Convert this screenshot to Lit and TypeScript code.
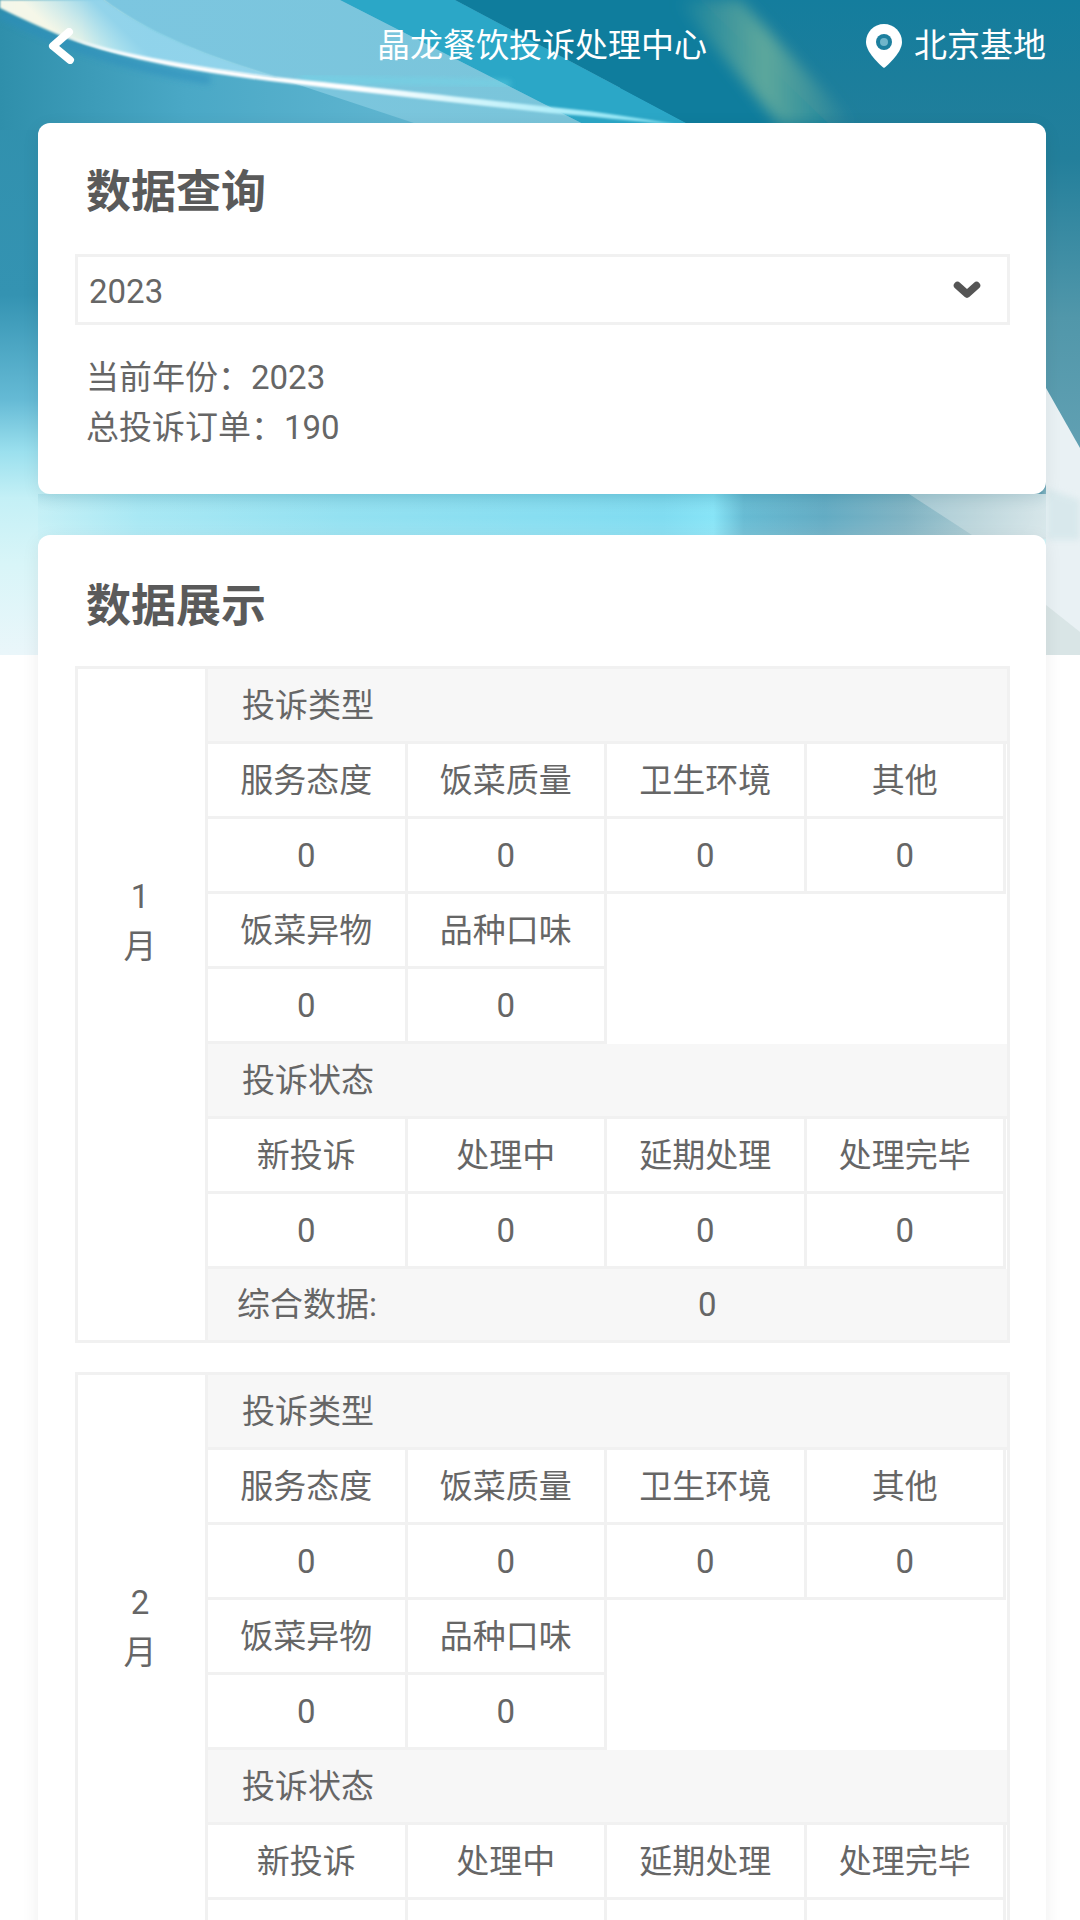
import { LitElement, html, css, svg } from "lit";
import { customElement } from "lit/decorators.js";

const background = svg`
<svg class="bg" viewBox="0 0 1080 655" preserveAspectRatio="none" xmlns="http://www.w3.org/2000/svg">
  <defs>
    <linearGradient id="base" x1="0" y1="0" x2="0" y2="1">
      <stop offset="0" stop-color="#2f8fab"/>
      <stop offset=".45" stop-color="#3493b2"/>
      <stop offset=".61" stop-color="#65bad5"/>
      <stop offset=".69" stop-color="#9be0ee"/>
      <stop offset=".76" stop-color="#c4f0f6"/>
      <stop offset=".86" stop-color="#d8f5f8"/>
      <stop offset="1" stop-color="#eaf6fa"/>
    </linearGradient>
    <linearGradient id="right" x1="0" y1="0" x2="0" y2="1">
      <stop offset="0" stop-color="#147d9d"/>
      <stop offset=".3" stop-color="#237f9b"/>
      <stop offset=".6" stop-color="#5197aa"/>
      <stop offset="1" stop-color="#6ba6b8"/>
    </linearGradient>
    <linearGradient id="strip" x1="0" y1="0" x2="1" y2="0">
      <stop offset="0" stop-color="#c5f0f6"/>
      <stop offset=".1" stop-color="#a8e8f4"/>
      <stop offset=".3" stop-color="#93e1f1"/>
      <stop offset=".62" stop-color="#7fdcf1"/>
      <stop offset=".67" stop-color="#86e4f7"/>
      <stop offset=".7" stop-color="#66bbd3"/>
      <stop offset=".78" stop-color="#62abc3"/>
      <stop offset=".86" stop-color="#7fb3c3"/>
      <stop offset=".93" stop-color="#a6c8d0"/>
      <stop offset="1" stop-color="#d2e3e7"/>
    </linearGradient>
    <linearGradient id="stripV" x1="0" y1="0" x2="0" y2="1">
      <stop offset="0" stop-color="#1a8fb0" stop-opacity=".14"/>
      <stop offset=".5" stop-color="#fff" stop-opacity="0"/>
      <stop offset="1" stop-color="#fff" stop-opacity=".14"/>
    </linearGradient>
    <linearGradient id="leftTop" x1="0" y1="0" x2="1" y2="0">
      <stop offset="0" stop-color="#2f8fab"/>
      <stop offset=".3" stop-color="#4aa8c6"/>
      <stop offset="1" stop-color="#74c2da"/>
    </linearGradient>
    <linearGradient id="band" gradientUnits="userSpaceOnUse" x1="0" y1="0" x2="275" y2="0">
      <stop offset="0" stop-color="#f4f7ea"/>
      <stop offset=".3" stop-color="#f6f8e6"/>
      <stop offset=".55" stop-color="#a5e8f5"/>
      <stop offset="1" stop-color="#c8f2f8"/>
    </linearGradient>
    <linearGradient id="bandTop" gradientUnits="userSpaceOnUse" x1="58" y1="36" x2="92" y2="0">
      <stop offset="0" stop-color="#9fdcf0" stop-opacity="0"/>
      <stop offset="1" stop-color="#8fd2ea" stop-opacity=".95"/>
    </linearGradient>
    <linearGradient id="thread" gradientUnits="userSpaceOnUse" x1="40" y1="0" x2="680" y2="0">
      <stop offset="0" stop-color="#ffffff"/>
      <stop offset=".5" stop-color="#ffffff"/>
      <stop offset="1" stop-color="#7fe3f5"/>
    </linearGradient>
    <linearGradient id="wedge" x1="0" y1="0" x2="1" y2="0">
      <stop offset="0" stop-color="#7cc6e0"/>
      <stop offset="1" stop-color="#7ac5da"/>
    </linearGradient>
    <linearGradient id="glow" x1="0" y1="0" x2="1" y2="0">
      <stop offset="0" stop-color="#5ea89c" stop-opacity="0"/>
      <stop offset=".5" stop-color="#5ea89c"/>
      <stop offset="1" stop-color="#5ea89c" stop-opacity="0"/>
    </linearGradient>
    <filter id="b1" x="-10%" y="-30%" width="120%" height="160%"><feGaussianBlur stdDeviation="1"/></filter>
    <filter id="b3" x="-10%" y="-50%" width="120%" height="200%"><feGaussianBlur stdDeviation="3"/></filter>
    <filter id="b6" x="-40%" y="-20%" width="180%" height="140%"><feGaussianBlur stdDeviation="7"/></filter>
  </defs>
  <rect width="1080" height="655" fill="url(#base)"/>
  <rect x="430" width="650" height="530" fill="url(#right)"/>
  <rect width="620" height="130" fill="url(#leftTop)"/>
  <rect x="38" y="494" width="1008" height="45" fill="url(#strip)"/>
  <rect x="38" y="494" width="1008" height="45" fill="url(#stripV)"/>
  <path d="M340 0 L455 0 L690 125 L585 125Z" fill="#2ba7c7"/>
  <path d="M455 0 L700 0 L830 125 L690 125Z" fill="#0f7d9d"/>
  <path d="M675 0 L740 0 L855 125 L780 125Z" fill="url(#glow)" filter="url(#b6)"/>
  <path d="M103 0 L340 0 L585 125 L420 125 L275 77 C210 58 150 35 103 0Z" fill="url(#wedge)"/>
  <path d="M0 14 C60 44 120 66 210 80" fill="none" stroke="#2c8dbd" stroke-width="9" opacity=".55" filter="url(#b3)"/>
  <path d="M0 8 C40 28 90 50 138 57 C190 66 240 73 275 77 C210 58 150 35 103 0 L0 0Z" fill="url(#band)" filter="url(#b1)"/>
  <path d="M0 8 C40 28 90 50 138 57 C190 66 240 73 275 77 C210 58 150 35 103 0 L0 0Z" fill="url(#bandTop)"/>
  <path d="M300 78 C360 82 440 80 510 84" fill="none" stroke="#6fdcec" stroke-width="4" opacity=".7" filter="url(#b3)"/>
  <path d="M40 26 C90 50 190 66 275 77 C380 88 460 97 560 108 C600 112 640 118 680 125 C630 121 590 116 550 113 C450 102 360 92 270 81 C180 70 100 55 40 26Z" fill="url(#thread)" filter="url(#b1)"/>
  <path d="M1046 388 L1080 448 L1080 655 L1046 655Z" fill="#e9f1f4"/>
  <path d="M1046 488 L1080 500 L1080 540 L1046 540Z" fill="#d2e5e9" opacity=".7" filter="url(#b3)"/>
  <path d="M1046 605 L1080 632 L1080 655 L1046 655Z" fill="#d9e5e6"/>
  <path d="M909 494 L975 537 L1046 537 L1046 494Z" fill="#dfebee" opacity=".4"/>
</svg>`;

const backIcon = svg`<svg class="back" viewBox="0 0 27 36" xmlns="http://www.w3.org/2000/svg"><path d="M21 4 L5 18 L22 32" fill="none" stroke="#fff" stroke-width="8" stroke-linejoin="round" stroke-linecap="round"/></svg>`;
const pinIcon = svg`<svg class="pin" viewBox="0 0 36 44" xmlns="http://www.w3.org/2000/svg"><path d="M18 0C8 0 0 8 0 18C0 30 18 44 18 44C18 44 36 30 36 18C36 8 28 0 18 0Z" fill="#fff"/><circle cx="18" cy="18" r="8" fill="#1c7f9e"/><circle cx="18" cy="18" r="4" fill="#6fb5ca"/></svg>`;
const chevron = svg`<svg class="chev" viewBox="0 0 28 18" xmlns="http://www.w3.org/2000/svg"><path d="M4.5 4.5 L14 13 L23.5 4.5" fill="none" stroke="#555" stroke-width="7.5" stroke-linecap="round" stroke-linejoin="round"/></svg>`;

const TYPES = ["服务态度", "饭菜质量", "卫生环境", "其他"];
const TYPES2 = ["饭菜异物", "品种口味"];
const STATES = ["新投诉", "处理中", "延期处理", "处理完毕"];

@customElement("app-root")
export class AppRoot extends LitElement {
  static styles = css`
    :host {
      display: block;
      position: relative;
      width: 1080px;
      height: 1920px;
      overflow: hidden;
      background: #fff;
      color: #666;
      font-family: Roboto, "Noto Sans CJK SC", sans-serif;
      font-size: 33px;
      line-height: 49.5px;
    }
    .bg { position: absolute; left: 0; top: 0; width: 1080px; height: 655px; display: block; }
    .page { position: relative; }
    .header {
      display: grid;
      grid-template-columns: 1fr auto 1fr;
      align-items: center;
      height: 50px;
      padding: 21px 34px 52px 48px;
      color: #fff;
    }
    .back { width: 27px; height: 36px; display: block; }
    .title { padding-right: 10px; }
    .loc { display: flex; align-items: center; justify-content: flex-end; gap: 12px; }
    .pin { width: 36px; height: 44px; display: block; }
    .card {
      margin: 0 34px 0 38px;
      padding: 0 36px 0 37px;
      background: #fff;
      border-radius: 12px;
      box-shadow: 0 4px 18px rgba(0, 0, 0, 0.07);
    }
    .query { padding-top: 36px; padding-bottom: 42px; margin-bottom: 41px; }
    .data { padding-top: 38px; }
    h2 {
      margin: 0;
      padding-left: 11px;
      font-size: 45px;
      line-height: 68px;
      font-weight: 700;
      color: #5a5a5a;
    }
    .select {
      margin-top: 27px;
      height: 71px;
      box-sizing: border-box;
      border: 3px solid #f1f1f1;
      padding: 4px 26px 0 11px;
      display: flex;
      align-items: center;
      justify-content: space-between;
    }
    .chev { width: 28px; height: 18px; display: block; margin-top: -3px; }
    .info { margin-top: 28px; padding-left: 11px; }
    .tables { margin-top: 25px; display: flex; flex-direction: column; gap: 29px; }
    .table { display: flex; border: 3px solid #f1f1f1; }
    .month {
      width: 130px;
      flex: none;
      padding: 203px 3px 0 0;
      box-sizing: border-box;
      border-right: 3px solid #f1f1f1;
      text-align: center;
    }
    .main { width: 799px; flex: none; }
    .row { display: flex; height: 75px; }
    .group {
      height: 75px;
      box-sizing: border-box;
      background: #f7f7f7;
      border-bottom: 3px solid #f1f1f1;
      padding: 1px 0 0 34px;
      line-height: 72px;
    }
    .cell {
      width: 199.5px;
      height: 75px;
      box-sizing: border-box;
      border-right: 3px solid #f1f1f1;
      border-bottom: 3px solid #f1f1f1;
      padding-top: 2px;
      display: flex;
      align-items: center;
      justify-content: center;
    }
    .total { display: flex; height: 71px; padding-top: 1px; box-sizing: border-box; align-items: center; background: #f7f7f7; }
    .total .label { width: 199.5px; box-sizing: border-box; padding-left: 29px; }
    .total .value { flex: 1; text-align: center; }
  `;

  private cells(labels: string[]) {
    return html`<div class="row">${labels.map((l) => html`<div class="cell">${l}</div>`)}</div>`;
  }

  /* Only what falls above the fold is given text: the second month is cut by the viewport. */
  private table(month: number, complete: boolean) {
    const zeros = (n: number) => Array.from({ length: n }, () => "0");
    return html`
      <div class="table">
        <div class="month"><div>${month}</div><div>月</div></div>
        <div class="main">
          <div class="group">投诉类型</div>
          ${this.cells(TYPES)} ${this.cells(zeros(4))} ${this.cells(TYPES2)} ${this.cells(zeros(2))}
          <div class="group">投诉状态</div>
          ${this.cells(STATES)}
          ${complete
            ? html`${this.cells(zeros(4))}
                <div class="total"><div class="label">综合数据:</div><div class="value">0</div></div>`
            : this.cells(["", "", "", ""])}
        </div>
      </div>
    `;
  }

  render() {
    return html`
      ${background}
      <div class="page">
        <div class="header">
          ${backIcon}
          <div class="title">晶龙餐饮投诉处理中心</div>
          <div class="loc">${pinIcon}<span>北京基地</span></div>
        </div>
        <section class="card query">
          <h2>数据查询</h2>
          <div class="select"><span>2023</span>${chevron}</div>
          <div class="info">
            <div>当前年份：2023</div>
            <div>总投诉订单：190</div>
          </div>
        </section>
        <section class="card data">
          <h2>数据展示</h2>
          <div class="tables">${this.table(1, true)} ${this.table(2, false)}</div>
        </section>
      </div>
    `;
  }
}
